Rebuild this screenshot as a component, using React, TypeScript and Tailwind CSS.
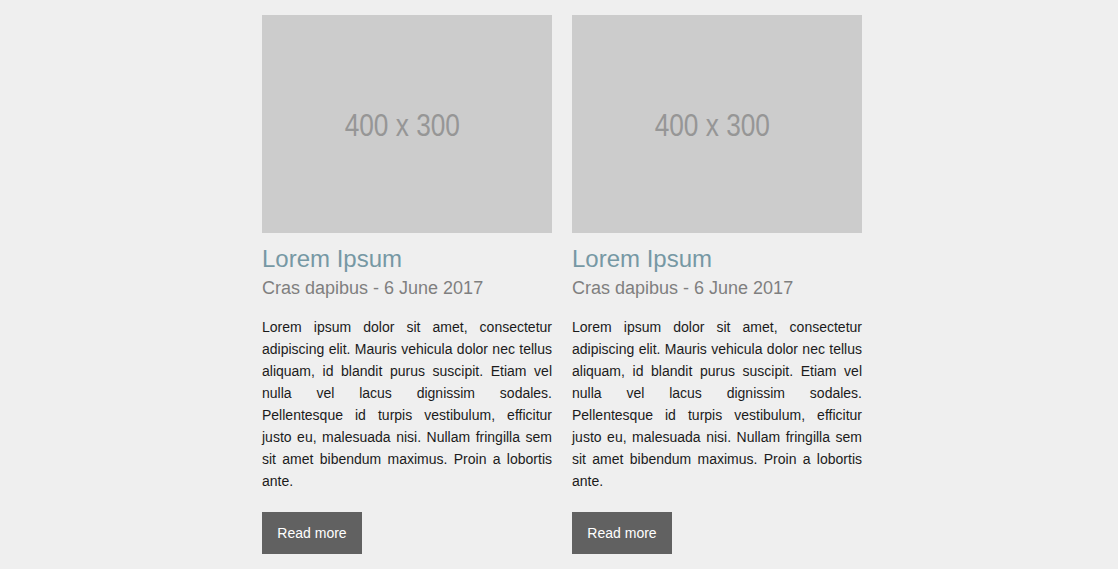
const posts = [
  { id: 1, title: "Lorem Ipsum", meta: "Cras dapibus - 6 June 2017" },
  { id: 2, title: "Lorem Ipsum", meta: "Cras dapibus - 6 June 2017" },
];

const body =
  "Lorem ipsum dolor sit amet, consectetur adipiscing elit. Mauris vehicula dolor nec tellus aliquam, id blandit purus suscipit. Etiam vel nulla vel lacus dignissim sodales. Pellentesque id turpis vestibulum, efficitur justo eu, malesuada nisi. Nullam fringilla sem sit amet bibendum maximus. Proin a lobortis ante.";

const PostCard = ({ title, meta }: { title: string; meta: string }) => {
  return (
    <article className="flex w-[290px] flex-col">
      {/* Placeholder image */}
      <div className="flex h-[218px] w-full items-center justify-center bg-[#cccccc] pt-[2px] pr-[9px]">
        <span className="inline-block scale-x-[0.82] text-[32px] leading-none text-[#969696]">
          400 x 300
        </span>
      </div>

      <h2 className="mt-[12px] text-[24px] leading-[28px] text-[#7698a4]">{title}</h2>
      <h3 className="mt-[5px] text-[18px] leading-[21px] text-[#7f7f7f]">{meta}</h3>

      <p className="mt-[17px] text-justify text-[14px] leading-[22px] text-[#1b1b1b]">{body}</p>

      <button className="mt-[20px] flex h-[42px] w-[100px] items-center justify-center bg-[#616161] text-[14px] text-white">
        Read more
      </button>
    </article>
  );
};

export default function App() {
  return (
    <div
      className="flex min-h-[569px] justify-center gap-[20px] bg-[#efefef] pt-[15px] pl-[6px]"
      style={{ fontFamily: '"Liberation Sans", Arial, sans-serif' }}
    >
      {posts.map((p) => (
        <PostCard key={p.id} title={p.title} meta={p.meta} />
      ))}
    </div>
  );
}
